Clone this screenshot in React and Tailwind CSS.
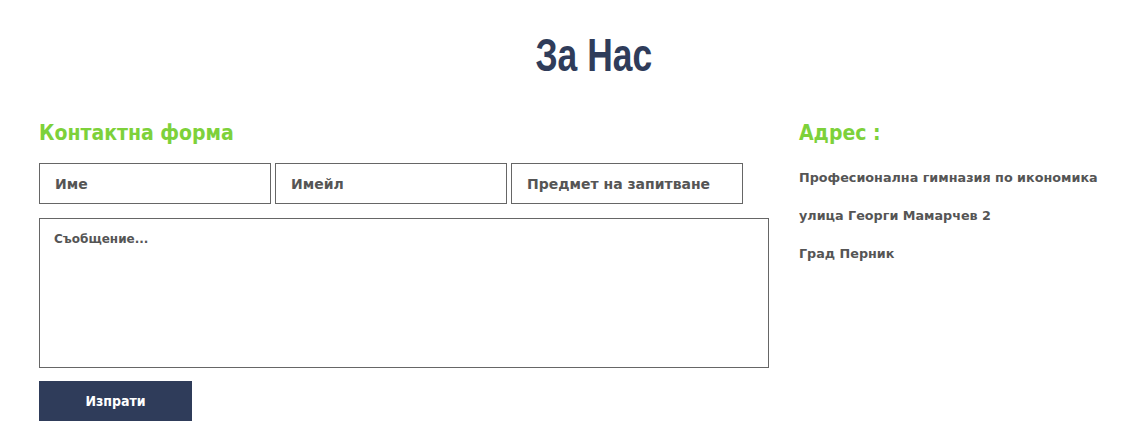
import React from 'react';

const body = "font-['DejaVu_Sans',sans-serif]";

export default function App() {
  return (
    <div className={`min-h-[440px] w-full bg-white ${body}`}>
      {/* Title */}
      <div className="flex justify-center pt-[27px] pl-[40px]">
        <h1 className="inline-block scale-x-[0.77] font-['Liberation_Sans',sans-serif] text-[46px] font-bold leading-[56px] text-[#2f3c5a]">
          За Нас
        </h1>
      </div>

      <div className="mt-[38px] flex px-[39px]">
        {/* Contact form */}
        <div className="w-[730px]">
          <h2 className="font-['DejaVu_Sans_Condensed',sans-serif] text-[21px] font-bold leading-[24px] text-[#7dd13a]">
            Контактна форма
          </h2>
          <div className="mt-[18px] flex gap-[4px]">
            {['Име', 'Имейл', 'Предмет на запитване'].map((p) => (
              <input
                key={p}
                placeholder={p}
                className="h-[41px] w-[232px] border border-[#666] px-[15px] text-[14px] font-bold text-[#555] outline-none placeholder:text-[#555]"
              />
            ))}
          </div>
          <textarea
            placeholder="Съобщение..."
            className="mt-[14px] block h-[150px] w-[730px] resize-none border border-[#666] px-[14px] py-[11px] text-[12px] font-bold text-[#555] outline-none placeholder:text-[#555]"
          />
          <button className="mt-[13px] h-[40px] w-[153px] bg-[#2f3c5a] font-['DejaVu_Sans_Condensed',sans-serif] text-[14px] font-bold text-white">
            Изпрати
          </button>
        </div>

        {/* Address */}
        <div className="ml-[30px] text-[#555]">
          <h2 className="font-['DejaVu_Sans_Condensed',sans-serif] text-[21px] font-bold leading-[24px] text-[#7dd13a]">
            Адрес :
          </h2>
          <div className="mt-[25px] flex flex-col gap-[22px] text-[12.75px] font-bold leading-[16px]">
            <p>Професионална гимназия по икономика</p>
            <p>улица Георги Мамарчев 2</p>
            <p>Град Перник</p>
          </div>
        </div>
      </div>
    </div>
  );
}
